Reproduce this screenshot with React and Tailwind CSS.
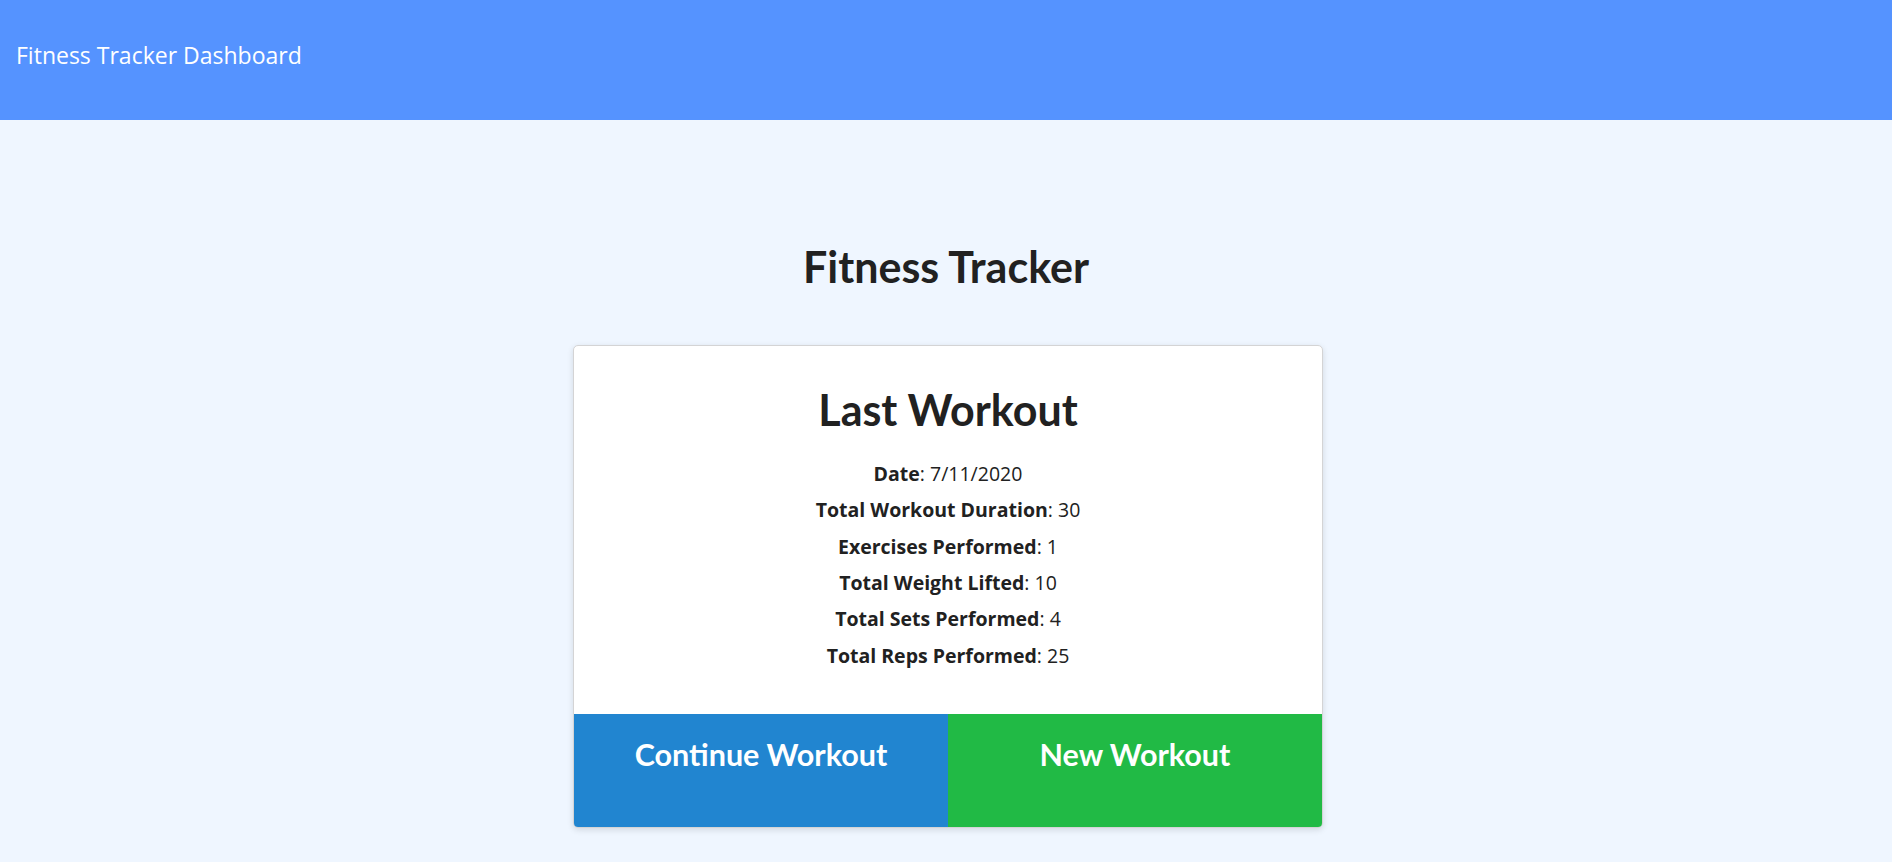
const stats = [
  { label: "Date", value: "7/11/2020" },
  { label: "Total Workout Duration", value: "30" },
  { label: "Exercises Performed", value: "1" },
  { label: "Total Weight Lifted", value: "10" },
  { label: "Total Sets Performed", value: "4" },
  { label: "Total Reps Performed", value: "25" },
];

const App = () => {
  return (
    <div className="min-h-screen bg-[#eff6ff] text-[#212121]">
      <header className="h-[120px] bg-[#5593ff] px-4 flex items-center pb-[10px]">
        <span className="text-[23px] text-white font-['Open_Sans',sans-serif]">
          Fitness Tracker Dashboard
        </span>
      </header>

      <main className="flex flex-col items-center font-['Lato',sans-serif]">
        <h1 className="mt-[121px] text-[43px] leading-[1.2] font-bold">
          Fitness Tracker
        </h1>

        <div className="mt-[52px] ml-[4px] w-[750px] bg-white border border-[#d4d4d5] rounded-[5px] shadow-[0_2px_6px_rgba(0,0,0,0.12)] overflow-hidden">
          <div className="pt-[38px] pb-[40px] text-center">
            <h2 className="text-[43px] leading-[1.2] font-bold">Last Workout</h2>
            <div className="mt-[21px] font-['Open_Sans',sans-serif] text-[19.5px]">
              {stats.map((s) => (
                <p key={s.label} className="leading-[36.3px]">
                  <span className="font-bold">{s.label}</span>: {s.value}
                </p>
              ))}
            </div>
          </div>
          <div className="grid grid-cols-2 h-[113px]">
            <button className="bg-[#2185d0] text-white text-[30.5px] font-bold leading-[1.2] pt-[22px] flex justify-center items-start">
              Continue Workout
            </button>
            <button className="bg-[#21ba45] text-white text-[30.5px] font-bold leading-[1.2] pt-[22px] flex justify-center items-start">
              New Workout
            </button>
          </div>
        </div>
      </main>
    </div>
  );
};

export default App;
